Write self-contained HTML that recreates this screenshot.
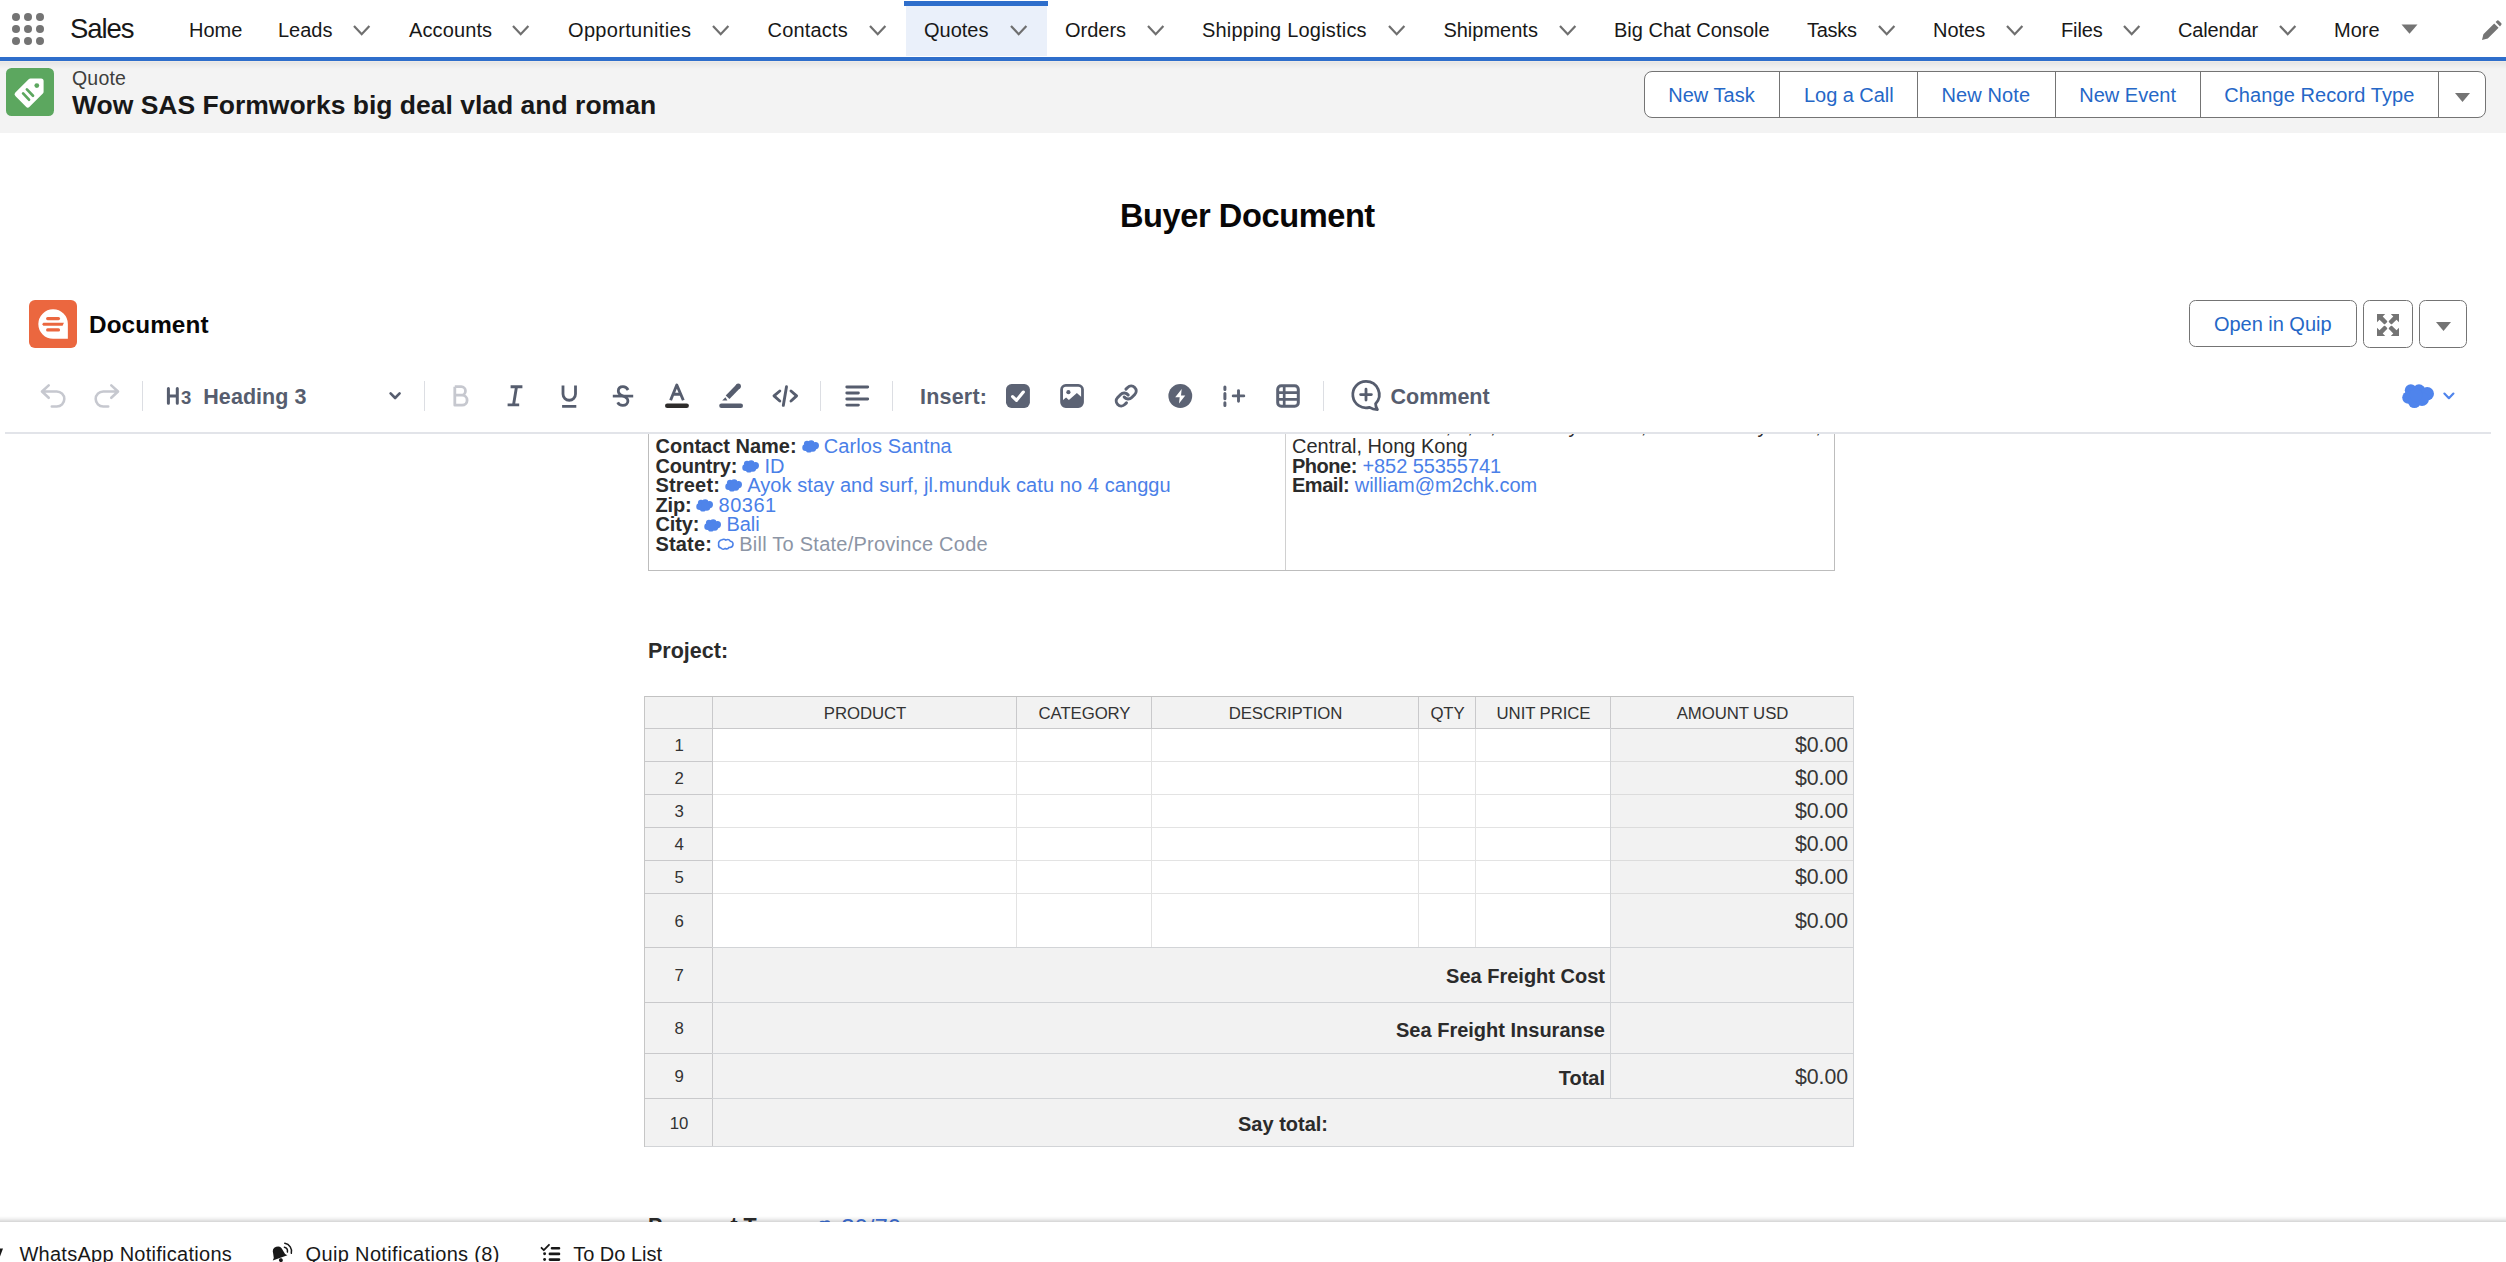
<!DOCTYPE html>
<html lang="en">
<head>
<meta charset="utf-8">
<title>Quote | Salesforce</title>
<style>
*{box-sizing:border-box;margin:0;padding:0}
html,body{width:2506px;height:1262px;overflow:hidden;background:#fff}
body{font-family:"Liberation Sans",sans-serif;color:#181818;position:relative;-webkit-font-smoothing:antialiased}
.abs{position:absolute}
.t{position:absolute;white-space:nowrap;line-height:1}
svg{position:absolute;overflow:visible}

/* ---------- global nav ---------- */
#nav{position:absolute;left:0;top:0;width:2506px;height:61px;background:#fff}
#navline{position:absolute;left:0;top:57px;width:2506px;height:4px;background:#2e6ecb}
#navshadow{position:absolute;left:0;top:61px;width:2506px;height:8px;background:linear-gradient(#efebe7 0,#efebe7 12%,#e5e5e5 13%,#f3f3f3)}
#tabbg{position:absolute;left:906px;top:5px;width:141px;height:51px;background:#eaf0fa}
#tabbar{position:absolute;left:904px;top:1px;width:144px;height:5px;background:#2e6ecb}
.nv{font-size:20px;top:19.5px;color:#181818}
.chev{top:25px;width:17.4px;height:10.6px}
.chev path{fill:none;stroke:#6f6f6f;stroke-width:2.3}

/* ---------- record header ---------- */
#hdr{position:absolute;left:0;top:61px;width:2506px;height:72px;background:#f3f3f3}
#qicon{position:absolute;left:6px;top:68px;width:48px;height:48px;border-radius:5.5px;background:#5ca75f}
#btngrp{position:absolute;left:1644px;top:71px;width:842px;height:47px;border:1.3px solid #747474;border-radius:8px;background:#fff}
.bdiv{position:absolute;top:72px;width:1.5px;height:45px;background:#747474}
.bt{font-size:20px;top:85px;color:#2567c7}

/* ---------- quip card ---------- */
.qbtn{position:absolute;top:300px;height:48px;border:1.4px solid #747474;border-radius:6.5px;background:#fff}
.tb{color:#565d6e;font-weight:bold;font-size:21.5px;top:386.9px}
.tdiv{position:absolute;top:381px;width:1px;height:30px;background:#dcdee3}
.ic path,.ic line,.ic rect,.ic circle,.ic polyline{vector-effect:none}
#tbline{position:absolute;left:5px;top:432px;width:2486px;height:2px;background:#e2e4e9}


/* ---------- document ---------- */
#doc{position:absolute;left:0;top:434px;width:2506px;height:788px;overflow:hidden}
.cell{position:absolute;font-size:20px;line-height:19.55px;color:#2b2b2b;white-space:nowrap}
.cell b{color:#2b2b2b}
.lk{color:#4a80e8}
.hd{visibility:hidden;font-style:normal}
.ph{color:#8c95a5}
svg.cl{position:static;display:inline-block;width:17.4px;height:12.8px;margin:0 4.8px 0 -0.6px;vertical-align:-0.2px}
.sh{font-size:16.8px;color:#333;text-align:center;letter-spacing:-.1px}
.am{font-size:21.3px;color:#363636}
.bl{font-size:20px;font-weight:bold;color:#2b2b2b}

/* ---------- footer ---------- */
#foot{position:absolute;left:0;top:1221.7px;width:2506px;height:41px;background:#fff}
.ft{font-size:20px;top:1243.7px;color:#181818}
</style>
</head>
<body>

<!-- ================= NAV ================= -->
<div id="nav">
  <div id="tabbg"></div>
  <div id="tabbar"></div>
  <svg style="left:12px;top:13px" width="32" height="32" viewBox="0 0 32 32">
    <g fill="#747474">
      <circle cx="4" cy="4" r="4"/><circle cx="16" cy="4" r="4"/><circle cx="28" cy="4" r="4"/>
      <circle cx="4" cy="16" r="4"/><circle cx="16" cy="16" r="4"/><circle cx="28" cy="16" r="4"/>
      <circle cx="4" cy="28" r="4"/><circle cx="16" cy="28" r="4"/><circle cx="28" cy="28" r="4"/>
    </g>
  </svg>
  <span class="t m" style="left:70px;top:14.9px;font-size:27.5px;letter-spacing:-1.05px;color:#181818">Sales</span>

  <span class="t nv m" style="left:189px">Home</span>
  <span class="t nv m" style="left:278px">Leads</span>
  <span class="t nv m" style="left:409px;letter-spacing:.12px">Accounts</span>
  <span class="t nv m" style="left:568px;letter-spacing:.33px">Opportunities</span>
  <span class="t nv m" style="left:767.5px;letter-spacing:.2px">Contacts</span>
  <span class="t nv m" style="left:924px">Quotes</span>
  <span class="t nv m" style="left:1065px">Orders</span>
  <span class="t nv m" style="left:1202px;letter-spacing:.2px">Shipping Logistics</span>
  <span class="t nv m" style="left:1443.4px">Shipments</span>
  <span class="t nv m" style="left:1614px">Big Chat Console</span>
  <span class="t nv m" style="left:1807px;letter-spacing:-.3px">Tasks</span>
  <span class="t nv m" style="left:1933px">Notes</span>
  <span class="t nv m" style="left:2061px;letter-spacing:-.1px">Files</span>
  <span class="t nv m" style="left:2178px;letter-spacing:-.15px">Calendar</span>
  <span class="t nv m" style="left:2334px">More</span>

  <svg class="chev" style="left:353px" viewBox="0 0 18 11"><path d="M1 1 L9 9.5 L17 1"/></svg>
  <svg class="chev" style="left:512px" viewBox="0 0 18 11"><path d="M1 1 L9 9.5 L17 1"/></svg>
  <svg class="chev" style="left:712px" viewBox="0 0 18 11"><path d="M1 1 L9 9.5 L17 1"/></svg>
  <svg class="chev" style="left:869px" viewBox="0 0 18 11"><path d="M1 1 L9 9.5 L17 1"/></svg>
  <svg class="chev" style="left:1010px" viewBox="0 0 18 11"><path d="M1 1 L9 9.5 L17 1"/></svg>
  <svg class="chev" style="left:1147px" viewBox="0 0 18 11"><path d="M1 1 L9 9.5 L17 1"/></svg>
  <svg class="chev" style="left:1388px" viewBox="0 0 18 11"><path d="M1 1 L9 9.5 L17 1"/></svg>
  <svg class="chev" style="left:1559px" viewBox="0 0 18 11"><path d="M1 1 L9 9.5 L17 1"/></svg>
  <svg class="chev" style="left:1878px" viewBox="0 0 18 11"><path d="M1 1 L9 9.5 L17 1"/></svg>
  <svg class="chev" style="left:2006px" viewBox="0 0 18 11"><path d="M1 1 L9 9.5 L17 1"/></svg>
  <svg class="chev" style="left:2123px" viewBox="0 0 18 11"><path d="M1 1 L9 9.5 L17 1"/></svg>
  <svg class="chev" style="left:2279px" viewBox="0 0 18 11"><path d="M1 1 L9 9.5 L17 1"/></svg>
  <!-- More triangle -->
  <svg style="left:2401px;top:24px" width="17" height="10" viewBox="0 0 17 10"><path d="M0.5 0.5 H16.5 L8.5 9.8 Z" fill="#747474"/></svg>
  <!-- pencil -->
  <svg style="left:2480px;top:20px" width="24" height="22" viewBox="0 0 24 22"><path d="M2 20 L3.4 14.2 L14.2 3.4 L18.6 7.8 L7.8 18.6 Z M15.6 2 L17.2 0.6 Q18 0 18.8 0.7 L21.3 3.2 Q22 4 21.3 4.8 L20 6.4 Z" fill="#747474"/></svg>
  <div id="navline"></div>
</div>

<!-- ================= RECORD HEADER ================= -->
<div id="hdr"></div>
<div id="navshadow"></div>
<div id="qicon"></div>
<svg style="left:6px;top:68px" width="48" height="48" viewBox="0 0 48 48">
  <path d="M24.44 13 H35.1 V23.66 L21.78 36.98 L11.12 26.32 Z" fill="#fff" stroke="#fff" stroke-width="5" stroke-linejoin="round"/>
  <circle cx="30.8" cy="17.6" r="2.4" fill="#5ca75f"/>
  <path d="M20.9 21.4 L27 27.7 M17.1 25.4 L23 31.7" fill="none" stroke="#5ca75f" stroke-width="2.7" stroke-linecap="round"/>
</svg>
<span class="t m" style="left:72px;top:69.2px;font-size:19.5px;letter-spacing:.2px;color:#3e3e3c">Quote</span>
<span class="t m" style="left:72px;top:91.6px;font-size:26.5px;font-weight:bold;color:#181818">Wow SAS Formworks big deal vlad and roman</span>

<div id="btngrp"></div>
<div class="bdiv" style="left:1778.5px"></div>
<div class="bdiv" style="left:1916.5px"></div>
<div class="bdiv" style="left:2054.5px"></div>
<div class="bdiv" style="left:2199.5px"></div>
<div class="bdiv" style="left:2437.5px"></div>
<span class="t bt m" style="left:1668.3px">New Task</span>
<span class="t bt m" style="left:1804px;letter-spacing:-.05px">Log a Call</span>
<span class="t bt m" style="left:1941.5px;letter-spacing:.12px">New Note</span>
<span class="t bt m" style="left:2079.3px">New Event</span>
<span class="t bt m" style="left:2224.3px;letter-spacing:.08px">Change Record Type</span>
<svg style="left:2455px;top:93px" width="15" height="9" viewBox="0 0 15 9"><path d="M0 0 H15 L7.5 9 Z" fill="#747474"/></svg>

<!-- ================= TITLE ================= -->
<span class="t m" style="left:1120px;top:200.2px;font-size:32.6px;font-weight:bold;color:#080707;letter-spacing:-0.42px">Buyer Document</span>

<!-- ================= QUIP CARD HEADER ================= -->
<div class="abs" style="left:29px;top:300px;width:48px;height:48px;border-radius:6px;background:#eb673f"></div>
<svg style="left:29px;top:300px" width="48" height="48" viewBox="0 0 48 48">
  <path d="M24.1 9.3 A14.75 14.75 0 0 1 38.85 24.05 V38.85 H24.1 A14.75 14.75 0 0 1 24.1 9.3 Z" fill="#fff"/>
  <g stroke="#eb673f" stroke-width="3.1" stroke-linecap="round">
    <line x1="18.6" y1="18.6" x2="29.5" y2="18.6"/>
    <line x1="18.6" y1="29.9" x2="29.5" y2="29.9"/>
  </g>
  <path d="M14.4 22.65 H34.9 L33.6 25.75 H14.4 L13.1 24.2 Z" fill="#eb673f"/>
</svg>
<span class="t m" style="left:89px;top:312.6px;font-size:24.3px;font-weight:bold;letter-spacing:.1px;color:#080707">Document</span>

<div class="qbtn" style="left:2189px;width:168px;height:47px"></div>
<span class="t m" style="left:2214px;top:313.5px;font-size:20px;color:#2567c7;letter-spacing:-0.03px">Open in Quip</span>
<div class="qbtn" style="left:2363px;width:50px"></div>
<svg style="left:2377px;top:314px" width="22" height="22" viewBox="0 0 22 22">
  <g fill="#747474">
    <path d="M0 0 H8.2 L5.7 2.5 L10.1 6.9 Q10.5 7.6 10 8.2 L8.2 10 Q7.6 10.5 6.9 10.1 L2.5 5.7 L0 8.2 Z"/>
    <path d="M22 0 V8.2 L19.5 5.7 L15.1 10.1 Q14.4 10.5 13.8 10 L12 8.2 Q11.5 7.6 11.9 6.9 L16.3 2.5 L13.8 0 Z"/>
    <path d="M0 22 V13.8 L2.5 16.3 L6.9 11.9 Q7.6 11.5 8.2 12 L10 13.8 Q10.5 14.4 10.1 15.1 L5.7 19.5 L8.2 22 Z"/>
    <path d="M22 22 H13.8 L16.3 19.5 L11.9 15.1 Q11.5 14.4 12 13.8 L13.8 12 Q14.4 11.5 15.1 11.9 L19.5 16.3 L22 13.8 Z"/>
  </g>
</svg>
<div class="qbtn" style="left:2419px;width:48px"></div>
<svg style="left:2436px;top:322px" width="15" height="9" viewBox="0 0 15 9"><path d="M0 0 H15 L7.5 9 Z" fill="#747474"/></svg>

<!-- ================= QUIP TOOLBAR ================= -->
<svg class="ic" style="left:0;top:370px" width="2506" height="50" viewBox="0 370 2506 50">
  <!-- undo / redo -->
  <g fill="none" stroke="#c6c8cf" stroke-width="2.6" stroke-linecap="round" stroke-linejoin="round">
    <path d="M48.7 385.4 L42 391.5 L48.7 397.8 M42.4 391.5 H56.8 A7.5 7.5 0 0 1 56.8 406.5 H51.8"/>
    <path d="M111.3 385.4 L118 391.5 L111.3 397.8 M117.6 391.5 H103.2 A7.5 7.5 0 0 0 103.2 406.5 H108.2"/>
  </g>
  <path d="M168.4 388.6 V403.3 M177.3 388.6 V403.3 M168.4 395.9 H177.3" fill="none" stroke="#565d6e" stroke-width="3" stroke-linecap="round"/>
  <!-- heading chevron -->
  <path d="M390.6 393.4 L395.1 398 L399.6 393.4" fill="none" stroke="#565d6e" stroke-width="2.6" stroke-linecap="round" stroke-linejoin="round"/>
  <!-- B -->
  <path d="M454.8 386.7 H461.2 A4.25 4.25 0 0 1 461.2 395.2 H454.8 M461.2 395.2 H462.1 A5 5 0 0 1 462.1 405.2 H454.8 V386.7" fill="none" stroke="#c6c8cf" stroke-width="2.8" stroke-linejoin="round"/>
  <!-- I -->
  <path d="M510.6 386.8 H522.4 M507.6 404.9 H519.2 M516.5 386.8 L513.5 404.9" fill="none" stroke="#565d6e" stroke-width="2.9"/>
  <!-- U -->
  <path d="M563 385.4 V394 A6.25 6.25 0 0 0 575.5 394 V385.4 M562.1 406.4 H576.3" fill="none" stroke="#565d6e" stroke-width="2.8"/>
  <!-- S -->
  <path d="M628.1 390 C626.9 387.7 625.1 386.7 623 386.7 C620 386.7 618.3 388.6 618.3 391 C618.3 393.6 620.3 395 623 396 C625.8 397 627.9 398.3 627.9 401 C627.9 403.6 625.8 405.3 622.8 405.3 C620.4 405.3 618.6 404.2 617.7 402.3" fill="none" stroke="#565d6e" stroke-width="2.8"/>
  <path d="M612.8 396.1 H633.2" fill="none" stroke="#565d6e" stroke-width="2.7"/>
  <!-- A -->
  <path d="M670.6 400.2 L676.8 385 L683.3 400.2 M673 394.2 H680.8" fill="none" stroke="#565d6e" stroke-width="2.9" stroke-linejoin="round"/>
  <rect x="665" y="403.4" width="23.9" height="4.5" rx="2.25" fill="#2e2c2b"/>
  <!-- highlighter -->
  <path d="M727.6 397.2 L738.3 386.2" fill="none" stroke="#565d6e" stroke-width="5.2"/>
  <circle cx="738.3" cy="386.2" r="2.6" fill="#565d6e"/>
  <path d="M722.2 400.5 L725.4 397.2 L727.4 400.5 Z" fill="#565d6e"/>
  <rect x="719.2" y="403.4" width="23.8" height="4.5" rx="2.25" fill="#565d6e"/>
  <!-- code -->
  <path d="M779.8 391 L774 395.9 L779.8 401 M791 391 L796.6 395.9 L791 401 M786.5 386.8 L783.3 405.4" fill="none" stroke="#565d6e" stroke-width="2.9" stroke-linecap="round" stroke-linejoin="round"/>
  <!-- align -->
  <path d="M846.8 387 H867.7 M846.8 393 H858.4 M846.8 399 H867.7 M846.8 405.1 H858.4" fill="none" stroke="#565d6e" stroke-width="2.9" stroke-linecap="round"/>
  <!-- checkbox -->
  <rect x="1006" y="384" width="23.9" height="23.9" rx="5.6" fill="#5c6374"/>
  <path d="M1012.6 396.6 L1016.5 400.3 L1023.3 392.1" fill="none" stroke="#fff" stroke-width="3.2" stroke-linecap="round" stroke-linejoin="round"/>
  <!-- image -->
  <g transform="translate(1060.2 384)">
    <rect x="1.4" y="1.4" width="20.9" height="21.1" rx="4.2" fill="none" stroke="#5c6374" stroke-width="2.8"/>
    <path d="M1.6 17 L5.9 13.4 L8.7 16 L16.7 9 L22.2 14 V20 Q22.2 22.6 19.6 22.6 H4.2 Q1.6 22.6 1.6 20 Z" fill="#5c6374"/>
    <circle cx="8.2" cy="8.2" r="2.1" fill="#5c6374"/>
  </g>
  <!-- link -->
  <g transform="translate(1114.2 384)" fill="none" stroke="#5c6374" stroke-width="3" stroke-linecap="round" stroke-linejoin="round">
    <path d="M10 13a5 5 0 0 0 7.54.54l3-3a5 5 0 0 0-7.07-7.07l-1.72 1.71"/>
    <path d="M14 11a5 5 0 0 0-7.54-.54l-3 3a5 5 0 0 0 7.07 7.07l1.71-1.71"/>
  </g>
  <!-- bolt -->
  <circle cx="1180.3" cy="396" r="11.9" fill="#5c6374"/>
  <path d="M1181.7 389 L1175.2 397.2 H1179.7 L1179 403.5 L1185.3 395.4 H1181 Z" fill="#fff"/>
  <!-- |+ -->
  <path d="M1224.9 387 V389.6 M1224.9 393.6 V398.8 M1224.9 402.8 V405.4" fill="none" stroke="#5c6374" stroke-width="3" stroke-linecap="round"/>
  <path d="M1233.2 395.9 H1243.8 M1238.5 390.6 V401.2" fill="none" stroke="#5c6374" stroke-width="2.9" stroke-linecap="round"/>
  <!-- table -->
  <rect x="1277.7" y="385.7" width="20.6" height="20.6" rx="3.6" fill="none" stroke="#5c6374" stroke-width="3"/>
  <path d="M1277.7 392.6 H1298.3 M1277.7 399.3 H1298.3 M1284.2 385.7 V406.3" fill="none" stroke="#5c6374" stroke-width="2.7"/>
  <!-- comment -->
  <path d="M1366 381.4 A13.2 13.2 0 0 1 1375.6 403.7 Q1375.6 407 1377.4 409.6 Q1372.8 409.4 1369.6 407.3 A13.2 13.2 0 1 1 1366 381.4 Z" fill="none" stroke="#565d6e" stroke-width="2.8" stroke-linejoin="round"/>
  <path d="M1360.6 394.6 H1371.4 M1366 389.2 V400" fill="none" stroke="#565d6e" stroke-width="2.8" stroke-linecap="round"/>
  <!-- cloud + chevron -->
  <g fill="#4f84ec">
    <circle cx="2410.8" cy="390.2" r="6"/><circle cx="2419" cy="390.6" r="6.3"/><circle cx="2427.2" cy="393.8" r="6.8"/>
    <circle cx="2408.4" cy="397.6" r="6.2"/><circle cx="2414.4" cy="401.8" r="6.3"/><circle cx="2422" cy="399.2" r="6.9"/>
    <circle cx="2416" cy="395" r="6.5"/>
  </g>
  <path d="M2444.4 393.6 L2448.9 398.2 L2453.4 393.6" fill="none" stroke="#4f84ec" stroke-width="2.2" stroke-linecap="round" stroke-linejoin="round"/>
</svg>
<div class="tdiv" style="left:142px"></div>
<div class="tdiv" style="left:424.2px"></div>
<div class="tdiv" style="left:820px"></div>
<div class="tdiv" style="left:892px"></div>
<div class="tdiv" style="left:1323px"></div>
<span class="t tb m" style="left:180.9px;top:388.5px;font-size:18.5px">3</span>
<span class="t tb m" style="left:203.3px;letter-spacing:0.05px">Heading 3</span>
<span class="t tb m" style="left:920px;letter-spacing:0.2px">Insert:</span>
<span class="t tb m" style="left:1390.5px">Comment</span>
<div id="tbline"></div>

<!-- ================= DOCUMENT ================= -->
<div id="doc">
<div class="abs" style="left:648px;top:-40px;width:1186.8px;height:176.5px;border:1.3px solid #bdbdbd"></div>
<div class="abs" style="left:1285px;top:-40px;width:1px;height:176px;background:#d0d0d0"></div>
<div class="cell" style="left:655.5px;top:3px">
<div><b class="m" style="letter-spacing:0px">Contact Name:</b> <svg class="cl" viewBox="0 0 17 12" preserveAspectRatio="none"><g fill="#4f84ea"><circle cx="4.9" cy="3.6" r="3"/><circle cx="9" cy="3.5" r="3.2"/><circle cx="13.2" cy="5.2" r="3.4"/><circle cx="3.4" cy="7.2" r="3.1"/><circle cx="6.8" cy="8.8" r="3"/><circle cx="10.6" cy="7.6" r="3.4"/><circle cx="8" cy="6" r="3"/></g></svg><span class="lk m" style="letter-spacing:0.1px">Carlos Santna</span></div>
<div><b class="m" style="letter-spacing:-0.2px">Country:</b> <svg class="cl" viewBox="0 0 17 12" preserveAspectRatio="none"><g fill="#4f84ea"><circle cx="4.9" cy="3.6" r="3"/><circle cx="9" cy="3.5" r="3.2"/><circle cx="13.2" cy="5.2" r="3.4"/><circle cx="3.4" cy="7.2" r="3.1"/><circle cx="6.8" cy="8.8" r="3"/><circle cx="10.6" cy="7.6" r="3.4"/><circle cx="8" cy="6" r="3"/></g></svg><span class="lk m" style="letter-spacing:0px">ID</span></div>
<div><b class="m" style="letter-spacing:0.17px">Street:</b> <svg class="cl" viewBox="0 0 17 12" preserveAspectRatio="none"><g fill="#4f84ea"><circle cx="4.9" cy="3.6" r="3"/><circle cx="9" cy="3.5" r="3.2"/><circle cx="13.2" cy="5.2" r="3.4"/><circle cx="3.4" cy="7.2" r="3.1"/><circle cx="6.8" cy="8.8" r="3"/><circle cx="10.6" cy="7.6" r="3.4"/><circle cx="8" cy="6" r="3"/></g></svg><span class="lk m" style="letter-spacing:0.08px">Ayok stay and surf, jl.munduk catu no 4 canggu</span></div>
<div><b class="m" style="letter-spacing:-0.18px">Zip:</b> <svg class="cl" viewBox="0 0 17 12" preserveAspectRatio="none"><g fill="#4f84ea"><circle cx="4.9" cy="3.6" r="3"/><circle cx="9" cy="3.5" r="3.2"/><circle cx="13.2" cy="5.2" r="3.4"/><circle cx="3.4" cy="7.2" r="3.1"/><circle cx="6.8" cy="8.8" r="3"/><circle cx="10.6" cy="7.6" r="3.4"/><circle cx="8" cy="6" r="3"/></g></svg><span class="lk m" style="letter-spacing:0.5px">80361</span></div>
<div><b class="m" style="letter-spacing:-0.14px">City:</b> <svg class="cl" viewBox="0 0 17 12" preserveAspectRatio="none"><g fill="#4f84ea"><circle cx="4.9" cy="3.6" r="3"/><circle cx="9" cy="3.5" r="3.2"/><circle cx="13.2" cy="5.2" r="3.4"/><circle cx="3.4" cy="7.2" r="3.1"/><circle cx="6.8" cy="8.8" r="3"/><circle cx="10.6" cy="7.6" r="3.4"/><circle cx="8" cy="6" r="3"/></g></svg><span class="lk m" style="letter-spacing:0px">Bali</span></div>
<div><b class="m" style="letter-spacing:0.16px">State:</b> <svg class="cl" viewBox="0 0 17 12" preserveAspectRatio="none"><path d="M4.9 1.6 Q7 0.6 8.6 2 Q11.4 0.4 13 3 Q16.2 3.6 15.6 6.6 Q15 9.2 11.8 8.8 Q10.4 11 8 9.8 Q5.6 11.4 3.8 9.4 Q1 8.6 1.6 6 Q1 2.6 4.9 1.6 Z" fill="none" stroke="#4a80e8" stroke-width="1.5"/></svg><span class="ph m" style="letter-spacing:0.25px">Bill To State/Province Code</span></div>
</div>
<div class="cell" style="left:1292px;top:3px">
<div class="m">Central, Hong Kong</div>
<div><b class="m" style="letter-spacing:-.48px">Phone:</b> <span class="lk m" style="letter-spacing:-.08px">+852 55355741</span></div>
<div><b class="m" style="letter-spacing:-.48px">Email:</b> <span class="lk m">william@m2chk.com</span></div>
</div>
<span class="t" style="left:1445.6px;top:-18.33px;font-size:20px;color:#2b2b2b">,</span>
<span class="t" style="left:1467.2px;top:-18.33px;font-size:20px;color:#2b2b2b">,</span>
<span class="t" style="left:1489.9px;top:-18.33px;font-size:20px;color:#2b2b2b">,</span>
<span class="t" style="left:1568.5px;top:-18.33px;font-size:20px;color:#2b2b2b">y</span>
<span class="t" style="left:1640.7px;top:-18.33px;font-size:20px;color:#2b2b2b">,</span>
<span class="t" style="left:1757.5px;top:-18.33px;font-size:20px;color:#2b2b2b">y</span>
<span class="t" style="left:1815.2px;top:-18.33px;font-size:20px;color:#2b2b2b">,</span>
<span class="t m" style="left:648px;top:206.5px;font-size:21.5px;font-weight:bold;color:#2b2b2b">Project:</span>
<div class="abs" style="left:644px;top:262px;width:1210px;height:451px;background:#f2f2f2"></div>
<div class="abs" style="left:713px;top:295px;width:897px;height:218px;background:#fff"></div>
<div class="abs" style="left:713px;top:327px;width:897px;height:1px;background:#e3e3e3"></div>
<div class="abs" style="left:713px;top:360px;width:897px;height:1px;background:#e3e3e3"></div>
<div class="abs" style="left:713px;top:393px;width:897px;height:1px;background:#e3e3e3"></div>
<div class="abs" style="left:713px;top:426px;width:897px;height:1px;background:#e3e3e3"></div>
<div class="abs" style="left:713px;top:459px;width:897px;height:1px;background:#e3e3e3"></div>
<div class="abs" style="left:1016px;top:295px;width:1px;height:218px;background:#e3e3e3"></div>
<div class="abs" style="left:1151px;top:295px;width:1px;height:218px;background:#e3e3e3"></div>
<div class="abs" style="left:1418px;top:295px;width:1px;height:218px;background:#e3e3e3"></div>
<div class="abs" style="left:1475px;top:295px;width:1px;height:218px;background:#e3e3e3"></div>
<div class="abs" style="left:1610px;top:327px;width:244px;height:1px;background:#dcdcdc"></div>
<div class="abs" style="left:1610px;top:360px;width:244px;height:1px;background:#dcdcdc"></div>
<div class="abs" style="left:1610px;top:393px;width:244px;height:1px;background:#dcdcdc"></div>
<div class="abs" style="left:1610px;top:426px;width:244px;height:1px;background:#dcdcdc"></div>
<div class="abs" style="left:1610px;top:459px;width:244px;height:1px;background:#dcdcdc"></div>
<div class="abs" style="left:644px;top:294px;width:69px;height:1px;background:#c9c9cb"></div>
<div class="abs" style="left:644px;top:327px;width:69px;height:1px;background:#c9c9cb"></div>
<div class="abs" style="left:644px;top:360px;width:69px;height:1px;background:#c9c9cb"></div>
<div class="abs" style="left:644px;top:393px;width:69px;height:1px;background:#c9c9cb"></div>
<div class="abs" style="left:644px;top:426px;width:69px;height:1px;background:#c9c9cb"></div>
<div class="abs" style="left:644px;top:459px;width:69px;height:1px;background:#c9c9cb"></div>
<div class="abs" style="left:644px;top:513px;width:69px;height:1px;background:#c9c9cb"></div>
<div class="abs" style="left:644px;top:568px;width:69px;height:1px;background:#c9c9cb"></div>
<div class="abs" style="left:644px;top:619px;width:69px;height:1px;background:#c9c9cb"></div>
<div class="abs" style="left:644px;top:664px;width:69px;height:1px;background:#c9c9cb"></div>
<div class="abs" style="left:1016px;top:262px;width:1px;height:33px;background:#c9c9cb"></div>
<div class="abs" style="left:1151px;top:262px;width:1px;height:33px;background:#c9c9cb"></div>
<div class="abs" style="left:1418px;top:262px;width:1px;height:33px;background:#c9c9cb"></div>
<div class="abs" style="left:1475px;top:262px;width:1px;height:33px;background:#c9c9cb"></div>
<div class="abs" style="left:1610px;top:262px;width:1px;height:33px;background:#c9c9cb"></div>
<div class="abs" style="left:712px;top:294px;width:1142px;height:1px;background:#c9c9cb"></div>
<div class="abs" style="left:712px;top:262px;width:1px;height:451px;background:#c9c9cb"></div>
<div class="abs" style="left:1610px;top:294px;width:1px;height:371px;background:#d2d4d7"></div>
<div class="abs" style="left:712px;top:513px;width:1142px;height:1px;background:#d2d4d7"></div>
<div class="abs" style="left:712px;top:568px;width:1142px;height:1px;background:#d2d4d7"></div>
<div class="abs" style="left:712px;top:619px;width:1142px;height:1px;background:#d2d4d7"></div>
<div class="abs" style="left:712px;top:664px;width:1142px;height:1px;background:#d2d4d7"></div>
<div class="abs" style="left:644px;top:262px;width:1210px;height:1px;background:#c2c2c2"></div>
<div class="abs" style="left:644px;top:712px;width:1210px;height:1px;background:#d2d4d7"></div>
<div class="abs" style="left:644px;top:262px;width:1px;height:451px;background:#c6c6c6"></div>
<div class="abs" style="left:1853px;top:262px;width:1px;height:451px;background:#d2d4d7"></div>
<span class="t sh m" style="left:713px;width:304px;top:271.6px">PRODUCT</span>
<span class="t sh m" style="left:1017px;width:135px;top:271.6px">CATEGORY</span>
<span class="t sh m" style="left:1152px;width:267px;top:271.6px">DESCRIPTION</span>
<span class="t sh m" style="left:1419px;width:57px;top:271.6px">QTY</span>
<span class="t sh m" style="left:1476px;width:135px;top:271.6px">UNIT PRICE</span>
<span class="t sh m" style="left:1611px;width:243px;top:271.6px">AMOUNT USD</span>
<span class="t sh m" style="left:645px;width:68px;top:304.2px">1</span>
<span class="t sh m" style="left:645px;width:68px;top:337.2px">2</span>
<span class="t sh m" style="left:645px;width:68px;top:370.2px">3</span>
<span class="t sh m" style="left:645px;width:68px;top:403.2px">4</span>
<span class="t sh m" style="left:645px;width:68px;top:436.2px">5</span>
<span class="t sh m" style="left:645px;width:68px;top:479.7px">6</span>
<span class="t sh m" style="left:645px;width:68px;top:534.2px">7</span>
<span class="t sh m" style="left:645px;width:68px;top:587.2px">8</span>
<span class="t sh m" style="left:645px;width:68px;top:635.2px">9</span>
<span class="t sh m" style="left:645px;width:68px;top:681.7px">10</span>
<span class="t am m" style="right:657.8px;top:301.4px">$0.00</span>
<span class="t am m" style="right:657.8px;top:334.4px">$0.00</span>
<span class="t am m" style="right:657.8px;top:367.4px">$0.00</span>
<span class="t am m" style="right:657.8px;top:400.4px">$0.00</span>
<span class="t am m" style="right:657.8px;top:433.4px">$0.00</span>
<span class="t am m" style="right:657.8px;top:476.9px">$0.00</span>
<span class="t am m" style="right:657.8px;top:633.4px">$0.00</span>
<span class="t bl m" style="right:901px;top:531.9px">Sea Freight Cost</span>
<span class="t bl m" style="right:901px;top:585.5px">Sea Freight Insuranse</span>
<span class="t bl m" style="right:901px;top:633.5px">Total</span>
<span class="t bl m" style="left:712px;width:1142px;text-align:center;top:679.7px">Say total:</span>
<span class="t" style="left:648px;top:782.4px;font-size:21.5px;font-weight:bold;color:#2b2b2b">P<i class="hd">aymen</i>t T<i class="hd">erms:</i></span>
<svg style="left:816.5px;top:786.3px" width="19" height="13.4" viewBox="0 0 17 12"><g fill="#3f73dc"><circle cx="4.9" cy="3.6" r="3"/><circle cx="9" cy="3.5" r="3.2"/><circle cx="13.2" cy="5.2" r="3.4"/><circle cx="3.4" cy="7.2" r="3.1"/><circle cx="6.8" cy="8.8" r="3"/><circle cx="10.6" cy="7.6" r="3.4"/><circle cx="8" cy="6" r="3"/></g></svg>
<span class="t" style="left:841.2px;top:781.9px;font-size:23.9px;color:#3f73dc">30/70</span>
</div>
<!-- ================= FOOTER ================= -->
<div class="abs" style="left:0;top:1215.6px;width:2506px;height:6.1px;background:linear-gradient(rgba(0,0,0,0),rgba(0,0,0,.05) 45%,rgba(0,0,0,.17))"></div>
<div id="foot"></div>
<svg style="left:0;top:1230px" width="700" height="32" viewBox="0 1230 700 32">
  <path d="M0 1248.6 H3 L0 1256.6 Z" fill="#181818"/>
  <!-- bell -->
  <g transform="translate(280.1 1257.9) rotate(-19.4)" fill="#181818">
    <path d="M-7.75 0 Q-5.3 -2 -5.1 -6.3 Q-4.9 -11.8 0 -11.8 Q4.9 -11.8 5.1 -6.3 Q5.3 -2 7.75 0 Z"/>
    <circle cx="0" cy="2.4" r="1.9"/>
  </g>
  <path d="M284.8 1243.3 A8.1 8.1 0 0 1 291.3 1253.3 M284.4 1247.3 A4.1 4.1 0 0 1 287.4 1252.0" fill="none" stroke="#181818" stroke-width="1.5" stroke-linecap="round"/>
  <!-- todo -->
  <path d="M552 1248.2 H559 M549.9 1253.9 H559 M549.9 1259.6 H559" fill="none" stroke="#181818" stroke-width="2.6" stroke-linecap="round"/>
  <path d="M541.5 1247.8 L543.8 1250.2 L549 1244.8" fill="none" stroke="#181818" stroke-width="1.8" stroke-linecap="round" stroke-linejoin="round"/>
  <circle cx="544.6" cy="1253.8" r="1.45" fill="#181818"/><circle cx="544.6" cy="1259.5" r="1.45" fill="#181818"/>
</svg>
<span class="t ft m" style="left:19.4px;letter-spacing:.27px">WhatsApp Notifications</span>
<span class="t ft m" style="left:305.6px;letter-spacing:.34px">Quip Notifications (8)</span>
<span class="t ft m" style="left:573.2px">To Do List</span>

</body>
</html>
